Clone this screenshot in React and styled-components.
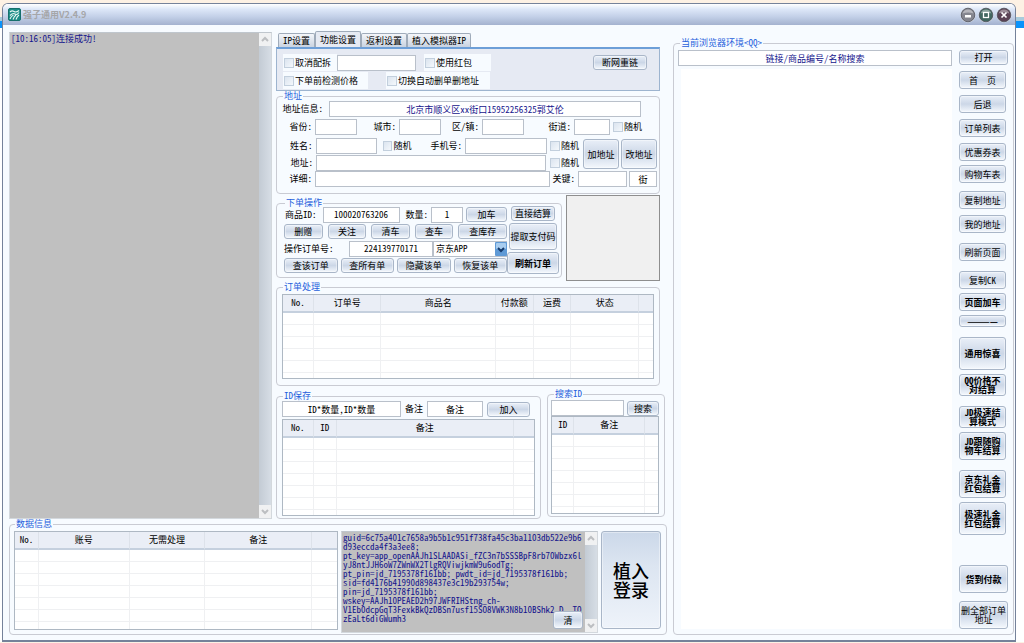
import React, {useState} from 'react';
import styled, {createGlobalStyle, ThemeProvider} from 'styled-components';

const theme = {
    colors: {
        page: '#f7fbff',
        legend: '#1f5fdc',
        navy: '#14148c',
        line: '#b9c0ca',
        groupLine: '#c9cbd3',
        button: 'linear-gradient(#e9eff8, #ccd7e7 50%, #f4f8fd)'
    }
}

const GlobalStyle = createGlobalStyle`
  * {
    box-sizing: border-box;
  }

  body {
    margin: 0;
    background: linear-gradient(#fdf1e4 0 17px, #a9cbdc 17px 21px, #0a93fb 21px 28px, #ffffff 28px);
  }

  body, input, button, textarea, select {
    font-family: "Noto Sans Mono CJK SC", "Liberation Serif", "Noto Sans CJK SC", serif;
    font-size: 9px;
    line-height: 10px;
    color: #000;
  }
`

const Window = styled.div`
  display: flex;
  flex-direction: column;
  min-height: calc(100vh - 4px);
  margin: 3px 8px 0 2px;
  border: 1px solid #75829a;
  border-bottom-width: 2px;
  border-radius: 6px 6px 0 0;
  background-color: ${props => props.theme.colors.page};
  overflow: hidden;
`

const TitleBar = styled.header`
  display: flex;
  align-items: center;
  height: 21px;
  padding: 0 2px 0 5px;
  background: linear-gradient(#ffffff, #dde7f8 25%, #c3d0e8 60%, #a4b2cf);

  h1 {
    flex: 1;
    margin: 0 0 0 2px;
    font-family: "Noto Sans CJK SC", sans-serif;
    font-size: 9px;
    color: #a5a6a8;
  }
`

const WindowButton = styled.button`
  display: flex;
  width: 18px;
  padding: 0 1px;
  border: none;
  background: none;
`

const Content = styled.main`
  flex: 1;
  display: grid;
  grid-template-columns: 658fr 341fr;
  gap: 6px;
  padding: 6px 1px 5px 6px;
`

const LeftArea = styled.div`
  display: flex;
  flex-direction: column;
  min-width: 0;
`

const TopArea = styled.div`
  flex: 1;
  display: grid;
  grid-template-columns: 263fr 391fr;
  gap: 4px;
`

const GreyPane = styled.div`
  position: relative;
  display: flex;
  margin-top: ${props => props.$top || 0}px;
  border: 1px solid #d3d8dd;
  border-top-color: #bfc6cd;
  background-color: #c0c0c0;

  textarea {
    flex: 1;
    min-width: 0;
    padding: 1px 0 0 1px;
    border: none;
    outline: none;
    resize: none;
    overflow: hidden;
    white-space: pre;
    background: none;
    line-height: 9px;
    color: ${props => props.theme.colors.navy};
  }
`

const ScrollTrack = styled.div`
  display: flex;
  flex-direction: column;
  justify-content: space-between;
  width: 12px;
  background: linear-gradient(90deg, #c3cbd4, #d6dde5);

  svg {
    background-color: #f0f1f2;
  }
`

const Group = styled.fieldset`
  display: flex;
  flex-direction: column;
  flex: ${props => props.$grow || 'none'};
  min-width: 0;
  height: ${props => props.$height ? props.$height + 'px' : 'auto'};
  margin: 0 0 ${props => props.$after || 0}px;
  padding: ${props => props.$pad || '0 4px'};
  border: 1px solid ${props => props.theme.colors.groupLine};
  border-radius: 4px;

  legend {
    margin-left: ${props => props.$indent || 1}px;
    padding: 0 1px;
    color: ${props => props.theme.colors.legend};
  }
`

const Center = styled.div`
  display: flex;
  flex-direction: column;
  min-width: 0;
`

const MainPart = styled.div`
  display: flex;
  flex-direction: column;
  margin-right: 7px;
`

const Tabs = styled.div`
  display: flex;
  align-items: flex-end;
  height: 16px;
  padding-left: 2px;
`

const Tab = styled.button`
  height: ${props => props.$active ? 16 : 14}px;
  padding: 0 4px;
  border: 1px solid #9fabba;
  border-bottom: none;
  border-radius: 2px 2px 0 0;
  background: ${props => props.$active ? '#e6eaf3' : 'linear-gradient(#f4f6fa, #c9d3e1)'};
  white-space: nowrap;
`

const TabPanel = styled.div`
  display: grid;
  grid-template-columns: 1fr auto;
  height: 44px;
  padding: 5px 12px 2px 6px;
  border: 1px solid #9db4cf;
  border-top: 2px solid #6d9fd8;
  background-color: #e6eaf3;
`

const Row = styled.div`
  display: flex;
  align-items: center;
  gap: ${props => props.$gap || 0}px;
  height: ${props => props.$height || 17}px;
  padding-left: ${props => props.$left || 0}px;
`

const SavedRow = styled.div`
  display: flex;
  align-items: flex-end;
  gap: 6px;
  padding: 3px 2px 0 0;
`

const Column = styled.div`
  flex: ${props => props.$width ? '0 0 ' + props.$width + 'px' : 1};
  display: flex;
  flex-direction: column;
  align-items: ${props => props.$align || 'stretch'};
  gap: ${props => props.$gap || 0}px;
  min-width: 0;
`

const TextBox = styled.input`
  flex: ${props => props.$width ? '0 0 ' + props.$width + 'px' : 1};
  min-width: 0;
  height: 16px;
  padding: 0 2px;
  border: 1px solid ${props => props.theme.colors.line};
  background-color: white;
  text-align: center;
  color: ${props => props.$navy ? props.theme.colors.navy : '#000'};
`

const FieldLabel = styled.label`
  flex: 1 1 ${props => props.$width}px;
  display: flex;
  align-items: center;
  justify-content: flex-end;
  gap: ${props => props.$wide ? 6 : 3}px;
  white-space: nowrap;
`

const PlainLabel = styled.label`
  flex: none;
  white-space: nowrap;
`

const CheckLabel = styled.label`
  display: flex;
  align-items: center;
  gap: 1px;
  width: ${props => props.$width ? props.$width + 'px' : 'auto'};
  height: 17px;
  margin-left: ${props => props.$left || 0}px;
  padding-left: ${props => props.$plate ? 1 : 0}px;
  background-color: ${props => props.$plate ? props.theme.colors.page : 'transparent'};
  white-space: nowrap;

  input {
    appearance: none;
    width: 10px;
    height: 10px;
    margin: 0;
    border: 1px solid #c2cfdd;
    background: linear-gradient(135deg, #dbe4ef, #f4f8fc);
  }

  input:checked {
    background: #5f93d2;
  }
`

const Button = styled.button`
  flex: ${props => props.$grow ? '1 1 ' + props.$grow + 'px' : 'none'};
  width: ${props => props.$width ? props.$width + 'px' : 'auto'};
  height: ${props => props.$height || 15}px;
  margin-top: ${props => props.$before || 0}px;
  padding: 0;
  border: 1px solid #a9b6c8;
  border-radius: 3px;
  background: ${props => props.theme.colors.button};
  box-shadow: inset 0 0 0 1px rgba(255, 255, 255, 0.4);
  font-weight: ${props => props.$bold ? 700 : 400};
  line-height: 9px;
  white-space: pre-line;

  &:hover {
    filter: brightness(0.96);
  }
`

const LoginButton = styled(Button)`
  background: linear-gradient(#cbd8e9, #dce5f1 35%, #eef3fa);
  font-family: "Noto Sans CJK SC", sans-serif;
  font-size: 18px;
  line-height: 19px;
  font-weight: 500;
`

const ClearButton = styled(Button)`
  position: absolute;
  right: 14px;
  bottom: 3px;
`

const Select = styled.div`
  position: relative;
  flex: 0 0 74px;

  select {
    appearance: none;
    display: block;
    width: 100%;
    height: 16px;
    padding: 0 2px;
    border: 1px solid ${props => props.theme.colors.line};
    border-radius: 0;
    background-color: white;
  }

  svg {
    position: absolute;
    top: 1px;
    right: 0;
    pointer-events: none;
  }
`

const Preview = styled.div`
  flex: 1;
  height: 86px;
  border: 1px solid #8e8e8e;
  background-color: #f0f0f0;
`

const TableBox = styled.div`
  flex: ${props => props.$height ? '0 0 ' + props.$height + 'px' : '1 1 0'};
  min-height: 0;
  border: 1px solid #aeb8c3;
  background-color: white;
  overflow: hidden;

  table {
    width: 100%;
    table-layout: fixed;
    border-collapse: separate;
    border-spacing: 0;
  }

  th {
    height: 18px;
    padding: 0;
    border-right: 1px solid #dde2ea;
    border-bottom: 2px solid #c5d0de;
    background-color: #eaeef6;
    font-weight: 400;
  }

  td {
    height: 12px;
    padding: 0;
    border-right: 1px solid #eff0f2;
    border-bottom: 1px solid #eff0f2;
  }

  th:last-child, td:last-child {
    border-right: none;
  }
`

const BottomRow = styled.div`
  display: flex;
  gap: 3px;
  height: 99px;
`

const Browser = styled.div`
  flex: 1;
  display: flex;
  gap: 7px;
`

const WebView = styled.div`
  flex: 1;
  margin: 3px 0 0 3px;
  background-color: white;
`

const sideButtons = [
    {text: '打开', height: 15, width: 49},
    {text: '首\u3000页', height: 18, before: 6},
    {text: '后退', height: 18, before: 6},
    {text: '订单列表', height: 18, before: 6},
    {text: '优惠券表', height: 18, before: 6},
    {text: '购物车表', height: 18, before: 4},
    {text: '复制地址', height: 18, before: 8},
    {text: '我的地址', height: 18, before: 6},
    {text: '刷新页面', height: 18, before: 10},
    {text: '复制CK', height: 18, before: 10},
    {text: '页面加车', height: 18, before: 4, bold: true},
    {text: '————', height: 12, before: 4, bold: true},
    {text: '通用惊喜', height: 33, before: 10, bold: true},
    {text: 'QQ价格不\n对结算', height: 22, before: 4, bold: true},
    {text: 'JD极速结\n算模式', height: 22, before: 10, bold: true},
    {text: 'JD跟随购\n物车结算', height: 28, before: 4, bold: true},
    {text: '京东礼金\n红包结算', height: 28, before: 10, bold: true},
    {text: '极速礼金\n红包结算', height: 33, before: 4, bold: true},
    {text: '货到付款', height: 28, before: 30, bold: true, width: 49},
    {text: '删全部订单\n地址', height: 28, before: 8, width: 49}
]

const cookie = `guid=6c75a401c7658a9b5b1c951f738fa45c3ba1103db522e9b6
d93eccda4f3a3ee8;
pt_key=app_openAAJh1SLAADASi_fZC3n7bSSSBpF8rb70Wbzx6l
yJ8ntJJH6oW7ZWnWX2TlgRQViwjkmW9u6odTg;
pt_pin=jd_7195378f161bb; pwdt_id=jd_7195378f161bb;
sid=fd4176b41990d898437e3c19b293754w;
pin=jd_7195378f161bb;
wskey=AAJh10PEAED2h97JWFRIHStng_ch-
V1Eb0dcpGqT3FexkBkQzDBSn7usf15SO8VWK3N8b10BShk2_D__TO
zEaLt6diGWumh3`

function Field({label, width, input, value, navy, wide}) {
    return (
        <FieldLabel $width={width} $wide={wide}>
            {label}
            <TextBox $width={input} $navy={navy} defaultValue={value} />
        </FieldLabel>
    );
}

function Check({label, ...rest}) {
    return (
        <CheckLabel {...rest}>
            <input type="checkbox" />
            {label}
        </CheckLabel>
    );
}

function ScrollBar() {
    return (
        <ScrollTrack>
            <svg width="12" height="13" viewBox="0 0 12 13" fill="none" stroke="#bcbec1" strokeWidth="2">
                <path d="M3 8l3-3 3 3" />
            </svg>
            <svg width="12" height="13" viewBox="0 0 12 13" fill="none" stroke="#bcbec1" strokeWidth="2">
                <path d="M3 5l3 3 3-3" />
            </svg>
        </ScrollTrack>
    );
}

// columns: [title, width] pairs, the last one is the empty filler
function DataTable({columns, rows, height}) {
    const total = columns.reduce((sum, c) => sum + c[1], 0)

    return (
        <TableBox $height={height}>
            <table>
                <colgroup>
                    {columns.map((c, i) => <col key={i} style={{width: `${c[1] / total * 100}%`}} />)}
                </colgroup>
                <thead>
                    <tr>{columns.map((c, i) => <th key={i}>{c[0]}</th>)}</tr>
                </thead>
                <tbody>
                    {Array.from({length: rows}, (_, r) => (
                        <tr key={r}>{columns.map((c, i) => <td key={i} />)}</tr>
                    ))}
                </tbody>
            </table>
        </TableBox>
    );
}

function Orb({label, color, children}) {
    return (
        <WindowButton aria-label={label}>
            <svg width="16" height="16" viewBox="0 0 16 16">
                <circle cx="8" cy="8" r="7.5" fill="#eef1f6" />
                <circle cx="8" cy="8" r="6.8" fill={color} stroke="#4a4d58" strokeWidth="0.8" />
                <path d="M2.6 6.5a5.6 5.6 0 0 1 10.8 0q-5.4-2-10.8 0z" fill="#fff" opacity="0.4" />
                {children}
            </svg>
        </WindowButton>
    );
}

function App() {
    const [tab, setTab] = useState('功能设置')

    return (
        <ThemeProvider theme={theme}>
            <GlobalStyle />
            <Window>
                <TitleBar>
                    <svg width="13" height="13" viewBox="0 0 13 13">
                        <rect x="0.5" y="0.5" width="12" height="12" rx="1.5" fill="#1c8c86" stroke="#16706c" />
                        <path d="M2 4q2-2 4-.5T11 2.500M2 7.500q3-3 5-1.500t4-1.500M2 11q1-3 3.500-4M5 11.500q1-3 3-4.500M8 11.500q1-3 3-4.500"
                              fill="none" stroke="#e4f6f2" strokeWidth="1.1" />
                    </svg>
                    <h1>强子通用V2.4.9</h1>
                    <Orb label="最小化" color="#85868f">
                        <rect x="5" y="8" width="6" height="2.5" fill="#fff" />
                    </Orb>
                    <Orb label="最大化" color="#41665f">
                        <rect x="5.5" y="5.5" width="5" height="5" fill="none" stroke="#fff" strokeWidth="1.3" />
                    </Orb>
                    <Orb label="关闭" color="#5b4355">
                        <path d="M5.500 5.500l5 5M10.500 5.500l-5 5" stroke="#fff" strokeWidth="1.7" />
                    </Orb>
                </TitleBar>

                <Content>
                    <LeftArea>
                        <TopArea>
                            <GreyPane $top={1}>
                                <textarea readOnly aria-label="日志" defaultValue="[10:16:05]连接成功!" />
                                <ScrollBar />
                            </GreyPane>

                            <Center>
                                <MainPart>
                                    <Tabs>
                                        {['IP设置', '功能设置', '返利设置', '植入模拟器IP'].map(name => (
                                            <Tab key={name} $active={tab === name} onClick={() => setTab(name)}>
                                                {name}
                                            </Tab>
                                        ))}
                                    </Tabs>
                                    <TabPanel>
                                        <Column>
                                            <Row>
                                                <Check label="取消配拆" $plate $width={54} />
                                                <TextBox $width={79} aria-label="配拆" />
                                                <Check label="使用红包" $plate $width={67} $left={8} />
                                            </Row>
                                            <Row $height={19}>
                                                <Check label="下单前检测价格" $plate $width={85} />
                                                <Check label="切换自动删单删地址" $plate $width={104} $left={18} />
                                            </Row>
                                        </Column>
                                        <Row>
                                            <Button $width={54}>断网重链</Button>
                                        </Row>
                                    </TabPanel>

                                    <Group $height={103} $pad="0 2px 0 5px">
                                        <legend>地址</legend>
                                        <Row $height={16}>
                                            <Field label="地址信息:" width={359} input={312} navy wide value="北京市顺义区xx街口15952256325郭艾伦" />
                                            <Column $width={16} />
                                        </Row>
                                        <Row $height={20}>
                                            <Field label="省份:" width={75} input={42} />
                                            <Field label="城市:" width={84} input={42} />
                                            <Field label="区/镇:" width={83} input={42} />
                                            <Field label="街道:" width={86} input={36} />
                                            <Check label="随机" $width={44} $left={3} />
                                        </Row>
                                        <Row $height={34}>
                                            <Column>
                                                <Row>
                                                    <Field label="姓名:" width={94} input={61} />
                                                    <Check label="随机" $width={29} $left={6} />
                                                    <Field label="手机号:" width={135} input={82} />
                                                    <Check label="随机" $width={30} $left={3} />
                                                </Row>
                                                <Row>
                                                    <Field label="地址:" width={263} input={230} />
                                                    <Check label="随机" $width={30} $left={4} />
                                                </Row>
                                            </Column>
                                            <Row $gap={2} $left={3}>
                                                <Button $width={36} $height={30}>加地址</Button>
                                                <Button $width={36} $height={30}>改地址</Button>
                                            </Row>
                                        </Row>
                                        <Row $height={16}>
                                            <Field label="详细:" width={268} input={235} />
                                            <Field label="关键:" width={77} input={49} />
                                            <Column $width={2} />
                                            <TextBox $width={28} aria-label="关键字" defaultValue="街" />
                                        </Row>
                                    </Group>

                                    <Row $gap={4} $height={88}>
                                        <Group $height={80} $pad="0 2px 0 7px">
                                            <legend>下单操作</legend>
                                            <Row $height={64}>
                                                <Column $width={223} $gap={1}>
                                                    <Row $height={16} $gap={3}>
                                                        <Field label="商品ID:" width={115} input={77} value="100020763206" wide />
                                                        <Field label="数量:" width={60} input={32} value="1" />
                                                        <Button $width={41}>加车</Button>
                                                    </Row>
                                                    <Row $height={16} $gap={5}>
                                                        <Button $grow={38}>删赠</Button>
                                                        <Button $grow={38}>关注</Button>
                                                        <Button $grow={38}>清车</Button>
                                                        <Button $grow={38}>查车</Button>
                                                        <Button $grow={48}>查库存</Button>
                                                    </Row>
                                                    <Row $height={16}>
                                                        <PlainLabel htmlFor="order-no">操作订单号:</PlainLabel>
                                                        <Column />
                                                        <TextBox id="order-no" $width={84} defaultValue="224139770171" />
                                                        <Select>
                                                            <select aria-label="平台">
                                                                <option>京东APP</option>
                                                            </select>
                                                            <svg width="12" height="14" viewBox="0 0 12 14">
                                                                <rect width="12" height="14" rx="1" fill="#5f9ad6" />
                                                                <rect x="1" y="1" width="10" height="6" rx="1" fill="#a8cdf0" />
                                                                <path d="M3 6l3 3 3-3" fill="none" stroke="#153a6b" strokeWidth="2" />
                                                            </svg>
                                                        </Select>
                                                    </Row>
                                                    <Row $height={16} $gap={3}>
                                                        <Button $grow={53}>查该订单</Button>
                                                        <Button $grow={53}>查所有单</Button>
                                                        <Button $grow={53}>隐藏该单</Button>
                                                        <Button $grow={53}>恢复该单</Button>
                                                    </Row>
                                                </Column>
                                                <Column $width={52} $align="center" $gap={2}>
                                                    <Button $width={44}>直接结算</Button>
                                                    <Button $width={48} $height={27}>提取支付码</Button>
                                                    <Button $width={52} $height={22} $bold>刷新订单</Button>
                                                </Column>
                                            </Row>
                                        </Group>
                                        <Preview />
                                    </Row>

                                    <Group $height={104} $pad="2px 5px 0">
                                        <legend>订单处理</legend>
                                        <DataTable height={85} rows={6} columns={[
                                            ['No.', 31], ['订单号', 68], ['商品名', 115], ['付款额', 38], ['运费', 38], ['状态', 68], ['', 14]
                                        ]} />
                                    </Group>
                                </MainPart>

                                <SavedRow>
                                    <Group $height={128} $grow="1 1 265px" $pad="0 5px 2px">
                                        <legend>ID保存</legend>
                                        <Row $height={16} $gap={4}>
                                            <TextBox aria-label="ID数量" defaultValue="ID*数量,ID*数量" />
                                            <PlainLabel htmlFor="remark">备注</PlainLabel>
                                            <TextBox id="remark" $width={56} defaultValue="备注" />
                                            <Button $width={43}>加入</Button>
                                            <Column $width={1} />
                                        </Row>
                                        <Column $gap={2}>
                                            <span />
                                            <DataTable rows={7} columns={[['No.', 31], ['ID', 23], ['备注', 179], ['', 20]]} />
                                        </Column>
                                    </Group>
                                    <Group $height={128} $after={2} $grow="1 1 118px" $pad="1px 5px 2px 3px" $indent={3}>
                                        <legend>搜索ID</legend>
                                        <Row $height={16} $gap={3}>
                                            <TextBox aria-label="搜索ID" />
                                            <Button $width={32}>搜索</Button>
                                        </Row>
                                        <Column>
                                            <DataTable rows={7} columns={[['ID', 23], ['备注', 73], ['', 13]]} />
                                        </Column>
                                    </Group>
                                </SavedRow>
                            </Center>
                        </TopArea>

                        <Group $pad="2px 5px 4px 4px">
                            <legend>数据信息</legend>
                            <BottomRow>
                                <Column>
                                    <DataTable rows={7} columns={[
                                        ['No.', 24], ['账号', 91], ['无需处理', 76], ['备注', 107], ['', 25]
                                    ]} />
                                </Column>
                                <Column $width={257}>
                                    <GreyPane>
                                        <textarea rows={11} aria-label="Cookie" defaultValue={cookie} />
                                        <ScrollBar />
                                        <ClearButton $width={30} $height={18}>清</ClearButton>
                                    </GreyPane>
                                </Column>
                                <LoginButton $width={60} $height={98}>{'植入\n登录'}</LoginButton>
                            </BottomRow>
                        </Group>
                    </LeftArea>

                    <Column $gap={7}>
                        <span />
                        <Group $grow="1" $pad="2px 5px 5px 4px" $indent={2}>
                            <legend>当前浏览器环境&lt;QQ&gt;</legend>
                            <Browser>
                                <Column>
                                    <Row $height={16}>
                                        <TextBox $navy aria-label="搜索" defaultValue="链接/商品编号/名称搜索" />
                                    </Row>
                                    <WebView />
                                </Column>
                                <Column $width={49} $align="flex-start">
                                    {sideButtons.map(b => (
                                        <Button
                                            key={b.text}
                                            $width={b.width || 47}
                                            $height={b.height}
                                            $before={b.before}
                                            $bold={b.bold}
                                        >
                                            {b.text}
                                        </Button>
                                    ))}
                                </Column>
                            </Browser>
                        </Group>
                    </Column>
                </Content>
            </Window>
        </ThemeProvider>
    );
}

export default App;
